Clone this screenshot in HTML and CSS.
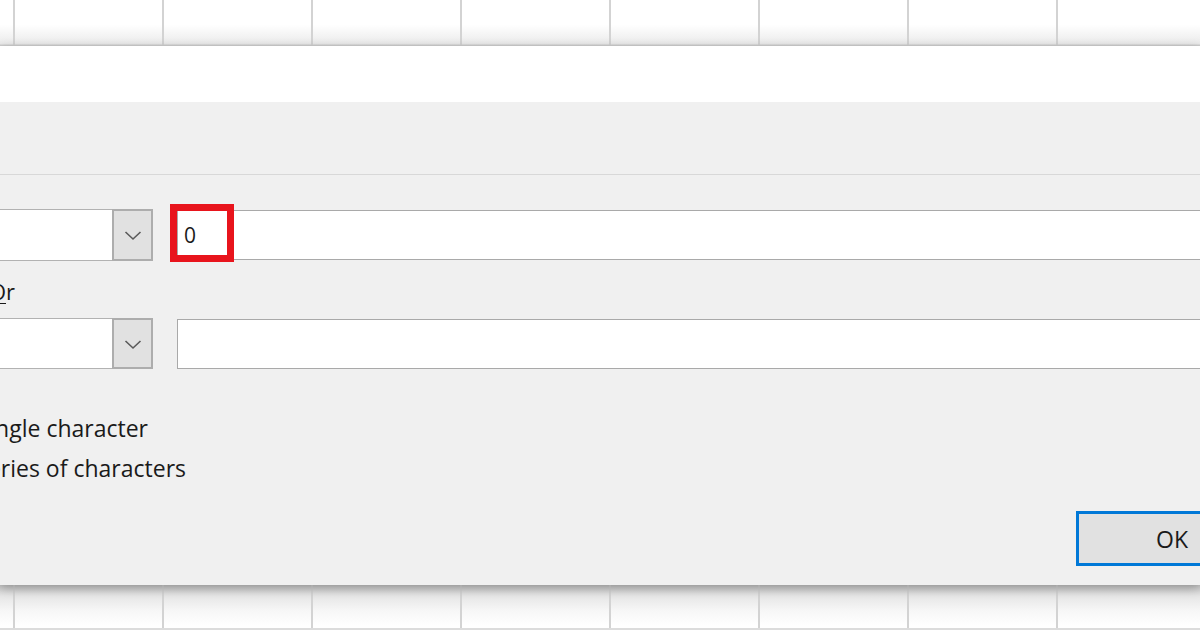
FILE: index.html
```html
<!DOCTYPE html>
<html>
<head>
<meta charset="utf-8">
<link rel="stylesheet" href="styles.css">
</head>
<body>
<div class="page">
  <div class="sheet sheet-top">
    <div class="cell"></div><div class="cell"></div><div class="cell"></div><div class="cell"></div><div class="cell"></div><div class="cell"></div><div class="cell"></div><div class="cell"></div><div class="cell"></div>
  </div>
  <div class="dialog">
    <div class="titlebar"></div>
    <div class="dbody">
      <div class="topsec"></div>
      <div class="row row1">
        <div class="combo">
          <div class="combo-text"></div>
          <div class="combo-btn"><svg width="18" height="11" viewBox="0 0 18 11"><polyline points="1.5,2 9,9 16.5,2" fill="none" stroke="#5a5a5a" stroke-width="1.6"/></svg></div>
        </div>
        <div class="field"><span class="val">0</span><div class="highlight"></div></div>
      </div>
      <div class="label"><span class="cut"><u>O</u>r</span></div>
      <div class="row row2">
        <div class="combo">
          <div class="combo-text"></div>
          <div class="combo-btn"><svg width="18" height="11" viewBox="0 0 18 11"><polyline points="1.5,2 9,9 16.5,2" fill="none" stroke="#5a5a5a" stroke-width="1.6"/></svg></div>
        </div>
        <div class="field"></div>
      </div>
      <div class="hints">
        <div class="hint hint1"><span class="cut">? represents any single character</span></div>
        <div class="hint hint2"><span class="cut">* represents any series of characters</span></div>
      </div>
      <div class="actions"><button class="ok">OK</button></div>
    </div>
  </div>
  <div class="sheet sheet-bottom">
    <div class="cell"></div><div class="cell"></div><div class="cell"></div><div class="cell"></div><div class="cell"></div><div class="cell"></div><div class="cell"></div><div class="cell"></div><div class="cell"></div>
  </div>
</div>
</body>
</html>
```
FILE: styles.css
```css
* { box-sizing: border-box; }
html, body { margin: 0; padding: 0; }
body {
  width: 1200px;
  height: 630px;
  overflow: hidden;
  background: #ffffff;
  font-family: "Open Sans", "Noto Sans", sans-serif;
  color: #1a1a1a;
}
.page { width: 1200px; height: 630px; overflow: hidden; display: flex; flex-direction: column; }

.sheet {
  display: grid;
  grid-template-columns: 15px repeat(8, 149px);
  flex: none;
}
.sheet .cell { border-right: 2px solid #d3d3d3; }
.sheet-top {
  height: 46px;
  background: linear-gradient(#ffffff 0, #ffffff 55%, #ebebeb 97%, #d6d6d6 100%);
  border-bottom: 1px solid #cfcfcf;
}
.sheet-bottom {
  height: 45px;
  background: linear-gradient(#c9c9c9 0, #e6e6e6 25%, #f7f7f7 60%, #ffffff 95%);
  border-bottom: 2px solid #dcdcdc;
}

.dialog {
  position: relative;
  z-index: 1;
  height: 539px;
  flex: none;
  background: #f0f0f0;
  box-shadow: 0 3px 10px rgba(0, 0, 0, 0.28);
  display: flex;
  flex-direction: column;
}
.titlebar { height: 56px; background: #ffffff; flex: none; }
.dbody { flex: 1; display: flex; flex-direction: column; }
.topsec { height: 73px; border-bottom: 1px solid #d8d8d8; flex: none; }

.row { display: flex; align-items: flex-start; gap: 24px; margin-right: -20px; }
.row1 { margin-top: 34px; height: 52px; }
.row2 { margin-top: 12px; height: 51px; }

.combo { width: 153px; height: 52px; display: flex; flex: none; }
.row2 .combo { height: 51px; }
.combo-text {
  flex: 1;
  background: #ffffff;
  border-top: 1px solid #b2b2b2;
  border-bottom: 1px solid #b2b2b2;
}
.combo-btn {
  width: 41px;
  background: #e1e1e1;
  border: 2px solid #adadad;
  display: flex;
  align-items: center;
  justify-content: center;
  padding-top: 1px;
}

.field {
  position: relative;
  flex: 1;
  height: 50px;
  margin-top: 1px;
  background: #ffffff;
  border: 1px solid #a9a9a9;
  display: flex;
  align-items: center;
  padding-left: 6px;
  font-size: 21px;
}
.val { line-height: 1; }
.highlight {
  position: absolute;
  left: -8px;
  top: -7px;
  width: 64px;
  height: 58px;
  border: 7px solid #e8141c;
}

.label { height: 30px; margin-top: 15px; font-size: 22px; line-height: 30px; }
.cut { white-space: nowrap; }
.label, .hint { display: flex; justify-content: flex-end; overflow: visible; }
.label { width: 15px; }
.label u { text-decoration-thickness: 1px; text-underline-offset: 3px; }

.hints { margin-top: 39px; font-size: 23px; line-height: 40px; }
.hint { height: 40px; }
.hint1 { width: 148px; }
.hint2 { width: 186px; }

.actions { display: flex; justify-content: flex-end; margin-top: 23px; margin-right: -68px; }
.ok {
  width: 192px;
  height: 55px;
  background: #e1e1e1;
  border: 3px solid #0078d7;
  font-family: "Open Sans", "Noto Sans", sans-serif;
  font-size: 23px;
  color: #1a1a1a;
  padding: 0;
}
```
